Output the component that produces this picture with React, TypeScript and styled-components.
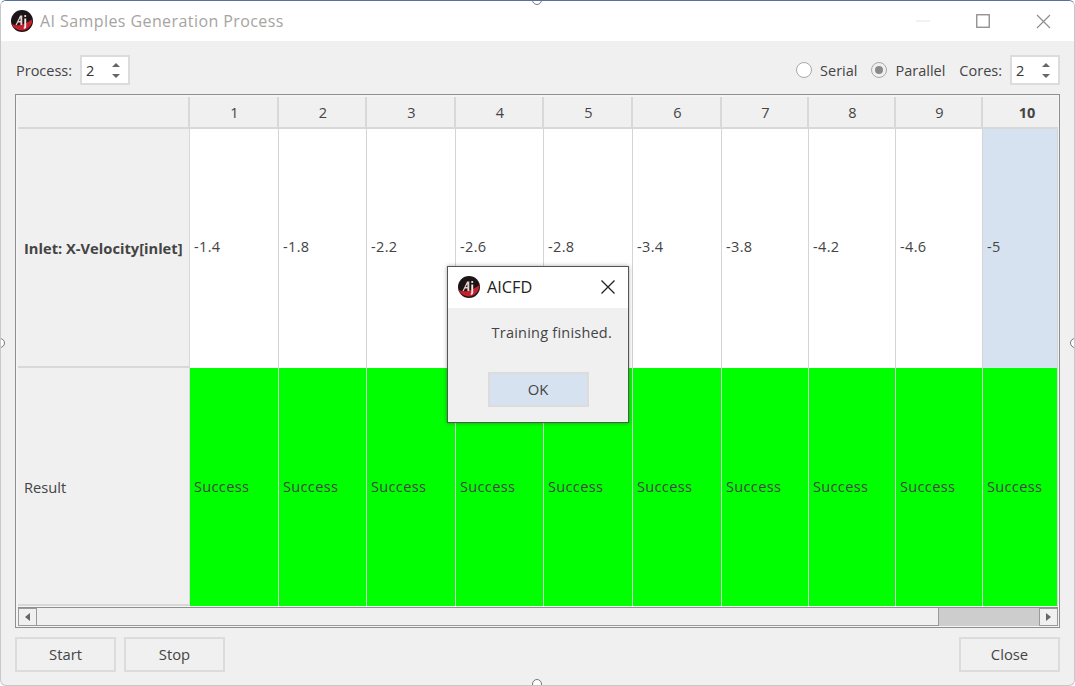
import React, { FunctionComponent } from 'react';
import styled, { createGlobalStyle } from 'styled-components';

const GlobalStyle = createGlobalStyle`
  html, body {
    margin: 0;
    padding: 0;
    background: #ffffff;
  }
  body {
    font-family: "Open Sans", "Noto Sans", sans-serif;
    font-size: 14px;
    color: #333;
  }
`;

const Window = styled.div`
  position: relative;
  box-sizing: border-box;
  width: 1075px;
  height: 686px;
  display: flex;
  flex-direction: column;
  overflow: hidden;
  background: #f0f0f0;
  border: 1px solid #c4c8cf;
  border-top: 1px solid #5a6f9c;
  border-radius: 6px;
`;

const TitleBar = styled.div`
  height: 40px;
  flex: none;
  display: flex;
  align-items: center;
  padding: 0 23px 0 10px;
  background: #fff;
`;

const WindowTitle = styled.div`
  margin-left: 7px;
  font-size: 16px;
  letter-spacing: 0.42px;
  color: #a6a4a2;
`;

const Controls = styled.div`
  margin-left: auto;
  display: flex;
  align-items: center;
  gap: 46px;
`;

const Body = styled.div`
  flex: 1;
  display: flex;
  flex-direction: column;
  padding: 14px 14px 0;
`;

const TopRow = styled.div`
  display: flex;
  align-items: center;
  height: 30px;
  padding-left: 1px;
`;

const Label = styled.span`
  font-size: 14.5px;
  color: #444;
`;

const Spacer = styled.div`
  flex: 1;
`;

const SpinBox = styled.div`
  box-sizing: border-box;
  flex: none;
  width: 50px;
  height: 30px;
  margin-left: 8px;
  display: flex;
  align-items: center;
  justify-content: space-between;
  padding: 0 8px 0 4px;
  background: #fff;
  border: 2px solid #dcdcdc;
  font-size: 14.5px;
  color: #333;
`;

const SpinArrows = styled.div`
  display: flex;
  flex-direction: column;
  gap: 7px;
`;

const RadioGroup = styled.label`
  display: flex;
  align-items: center;
  gap: 8px;
  margin-right: 14px;
`;

const RadioCircle = styled.span<{ $checked?: boolean }>`
  box-sizing: border-box;
  width: 16px;
  height: 16px;
  border-radius: 50%;
  border: 1px solid #a8a8a8;
  background: ${(p) => (p.$checked ? '#f0f0f0' : '#fff')};
  display: flex;
  align-items: center;
  justify-content: center;

  &::after {
    content: '';
    display: ${(p) => (p.$checked ? 'block' : 'none')};
    width: 8px;
    height: 8px;
    border-radius: 50%;
    background: #8a8a8a;
  }
`;

const TableFrame = styled.div`
  box-sizing: border-box;
  margin-top: 9px;
  width: 1045px;
  height: 534px;
  display: flex;
  flex-direction: column;
  padding: 2px 1px 1px 2px;
  background: #f4f4f4;
  border: 1px solid #8f8f8f;
`;

const Grid = styled.div`
  display: grid;
  grid-template-columns: 172px 89px 88px 89px 88px 89px 89px 87px 87px 87px 75px;
  grid-template-rows: 32px 239px 238px;
  height: 509px;
  flex: none;
`;

const Corner = styled.div`
  background: #f0f0f0;
  border-right: 2px solid #d8d8d8;
  border-bottom: 2px solid #d8d8d8;
`;

const ColHeader = styled.div<{ $active?: boolean }>`
  display: flex;
  align-items: center;
  justify-content: center;
  padding-left: ${(p) => (p.$active ? '13px' : '2px')};
  background: #f0f0f0;
  border-right: ${(p) => (p.$active ? '0' : '2px solid #d8d8d8')};
  border-bottom: 2px solid #d8d8d8;
  font-size: 14.5px;
  font-weight: ${(p) => (p.$active ? 700 : 400)};
  color: #444;
`;

const RowHeader = styled.div<{ $bold?: boolean }>`
  display: flex;
  align-items: center;
  padding-left: 6px;
  padding-top: ${(p) => (p.$bold ? '0' : '2px')};
  background: #f0f0f0;
  border-right: 1px solid #d8d8d8;
  border-bottom: 2px solid #d8d8d8;
  font-size: 14.7px;
  white-space: nowrap;
  font-weight: ${(p) => (p.$bold ? 700 : 400)};
  color: #444;
`;

const Cell = styled.div<{ $bg: string; $raised?: boolean }>`
  display: flex;
  align-items: center;
  padding-left: 4px;
  padding-bottom: ${(p) => (p.$raised ? '4px' : '1px')};
  background: ${(p) => p.$bg};
  border-right: 1px solid #d4d4d4;
  font-size: 14.5px;
  letter-spacing: 0.35px;
  color: #444;
`;

const ScrollBar = styled.div`
  box-sizing: border-box;
  height: 20px;
  margin-top: 1px;
  display: flex;
  background: #cdcdcd;
  border-top: 1px solid #8f8f8f;
`;

const ScrollButton = styled.div`
  box-sizing: border-box;
  width: 19px;
  flex: none;
  display: flex;
  align-items: center;
  justify-content: center;
  background: #f0f0f0;
  border: 1px solid #9a9a9a;
`;

const ScrollThumb = styled.div`
  box-sizing: border-box;
  width: 902px;
  flex: none;
  background: #f0f0f0;
  border-right: 1px solid #9a9a9a;
  border-bottom: 1px solid #9a9a9a;
`;

const ScrollTrack = styled.div`
  flex: 1;
`;

const BottomRow = styled.div`
  display: flex;
  gap: 8px;
  margin-top: 9px;
`;

const Button = styled.button<{ $primary?: boolean }>`
  box-sizing: border-box;
  width: 101px;
  height: 35px;
  padding: 0 0 2px;
  font-family: inherit;
  font-size: 14.8px;
  color: #444;
  background: ${(p) => (p.$primary ? '#d7e2f1' : '#f0f0f0')};
  border: 2px solid #dcdcdc;
`;

const Dialog = styled.div`
  position: absolute;
  left: 446px;
  top: 265px;
  box-sizing: border-box;
  width: 182px;
  height: 157px;
  display: flex;
  flex-direction: column;
  background: #f0f0f0;
  border: 1px solid #555;
  box-shadow: 0 0 4px rgba(0, 0, 0, 0.35);
`;

const DialogTitle = styled.div`
  height: 40px;
  flex: none;
  display: flex;
  align-items: center;
  justify-content: space-between;
  padding: 0 13px 1px 10px;
  background: #fff;
`;

const DialogName = styled.div`
  display: flex;
  align-items: center;
  gap: 7px;
  font-size: 16.3px;
  color: #222;
`;

const DialogMessage = styled.div`
  margin-top: 15px;
  padding-right: 16px;
  text-align: right;
  font-size: 14.5px;
  letter-spacing: 0.22px;
  color: #444;
`;

const DialogActions = styled.div`
  display: flex;
  justify-content: center;
  margin-top: 30px;
`;

const Handle = styled.span<{ $left: number; $top: number }>`
  position: absolute;
  left: ${(p) => p.$left}px;
  top: ${(p) => p.$top}px;
  box-sizing: border-box;
  width: 10px;
  height: 10px;
  border-radius: 50%;
  background: #fff;
  border: 1px solid #777;
`;

const Logo: FunctionComponent<{ size: number }> = ({ size }) => (
  <svg width={size} height={size} viewBox="0 0 22 22">
    <circle cx="11" cy="11" r="11" fill="#1c1416" />
    <path d="M0.6 14c3 1.4 6 1.6 9 1 4-.8 8-3 11.9-6a11 11 0 0 1-21 5z" fill="#c5202c" />
    <path d="M4.5 15l4.6-9.500h2.200v9.500H9.400v-2.600H7l-1.200 2.600z" fill="#e6d0d0" />
    <path d="M7.700 11h1.700V8z" fill="#1c1416" />
    <path d="M13.300 8.500h1.900v8c0 1.400-.9 2.300-2.500 2.300v-1.400c.4 0 .6-.3.6-.8z" fill="#f4eaea" />
    <circle cx="14.200" cy="6" r="1.100" fill="#f4eaea" />
  </svg>
);

const ArrowUp = () => (
  <svg width="8" height="4" viewBox="0 0 8 4"><path d="M4 0l4 4H0z" fill="#666" /></svg>
);

const ArrowDown = () => (
  <svg width="8" height="4" viewBox="0 0 8 4"><path d="M0 0h8L4 4z" fill="#666" /></svg>
);

const Spin: FunctionComponent<{ value: number }> = ({ value }) => (
  <SpinBox>
    {value}
    <SpinArrows>
      <ArrowUp />
      <ArrowDown />
    </SpinArrows>
  </SpinBox>
);

const velocities = ['-1.4', '-1.8', '-2.2', '-2.6', '-2.8', '-3.4', '-3.8', '-4.2', '-4.6', '-5'];

const App: FunctionComponent = () => (
  <>
    <GlobalStyle />
    <Window>
      <TitleBar>
        <Logo size={22} />
        <WindowTitle>AI Samples Generation Process</WindowTitle>
        <Controls>
          <svg width="14" height="2" viewBox="0 0 14 2"><path d="M0 1h14" stroke="#e4e4e4" /></svg>
          <svg width="14" height="14" viewBox="0 0 14 14">
            <rect x="0.75" y="0.75" width="12.5" height="12.5" fill="none" stroke="#8a8a8a" strokeWidth="1.3" />
          </svg>
          <svg width="15" height="15" viewBox="0 0 15 15">
            <path d="M1 1l13 13M14 1L1 14" stroke="#8a8a8a" strokeWidth="1.1" />
          </svg>
        </Controls>
      </TitleBar>
      <Body>
        <TopRow>
          <Label>Process:</Label>
          <Spin value={2} />
          <Spacer />
          <RadioGroup>
            <RadioCircle />
            <Label>Serial</Label>
          </RadioGroup>
          <RadioGroup>
            <RadioCircle $checked />
            <Label>Parallel</Label>
          </RadioGroup>
          <Label>Cores:</Label>
          <Spin value={2} />
        </TopRow>
        <TableFrame>
          <Grid>
            <Corner />
            {velocities.map((_, i) => (
              <ColHeader key={i} $active={i === 9}>{i + 1}</ColHeader>
            ))}
            <RowHeader $bold>Inlet: X-Velocity[inlet]</RowHeader>
            {velocities.map((v, i) => (
              <Cell key={v} $raised $bg={i === 9 ? '#d7e2f1' : '#fff'}>{v}</Cell>
            ))}
            <RowHeader>Result</RowHeader>
            {velocities.map((v) => (
              <Cell key={v} $bg="#00ff00">Success</Cell>
            ))}
          </Grid>
          <ScrollBar>
            <ScrollButton>
              <svg width="5" height="8" viewBox="0 0 5 8"><path d="M5 0v8L0 4z" fill="#666" /></svg>
            </ScrollButton>
            <ScrollThumb />
            <ScrollTrack />
            <ScrollButton>
              <svg width="5" height="8" viewBox="0 0 5 8"><path d="M0 0v8l5-4z" fill="#666" /></svg>
            </ScrollButton>
          </ScrollBar>
        </TableFrame>
        <BottomRow>
          <Button>Start</Button>
          <Button>Stop</Button>
          <Spacer />
          <Button>Close</Button>
        </BottomRow>
      </Body>
      <Dialog>
        <DialogTitle>
          <DialogName>
            <Logo size={22} />
            AICFD
          </DialogName>
          <svg width="14" height="14" viewBox="0 0 14 14">
            <path d="M.5.500l13 13M13.500.500l-13 13" stroke="#222" strokeWidth="1.3" />
          </svg>
        </DialogTitle>
        <DialogMessage>Training finished.</DialogMessage>
        <DialogActions>
          <Button $primary>OK</Button>
        </DialogActions>
      </Dialog>
      <Handle $left={531} $top={-6} />
      <Handle $left={-6} $top={337} />
      <Handle $left={1069} $top={337} />
      <Handle $left={531} $top={678} />
    </Window>
  </>
);

export default App;
